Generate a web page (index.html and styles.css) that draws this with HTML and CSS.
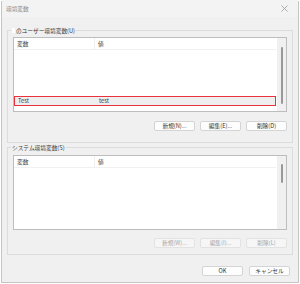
FILE: index.html
```html
<!DOCTYPE html>
<html>
<head>
<title>環境変数</title>
<link rel="stylesheet" href="styles.css">
</head>
<body>

<div class="window">
  <div class="titlebar">
    <span class="title">環境変数</span>
    <svg class="close" width="7" height="7" viewBox="0 0 7 7">
      <path d="M0.5 0.5 L6.5 6.5 M6.5 0.5 L0.5 6.5" stroke="#9a9a9a" stroke-width="0.8" fill="none"/>
    </svg>
  </div>

  <div class="content">
    <div class="group group-user">
      <div class="group-label"><span class="redacted"></span>のユーザー環境変数(U)</div>
      <div class="listbox">
        <div class="list-main">
          <div class="list-header">
            <div class="col col-name">変数</div>
            <div class="col col-value">値</div>
          </div>
          <div class="list-rows">
            <div class="row selected">
              <div class="col col-name">Test</div>
              <div class="col col-value">test</div>
            </div>
          </div>
        </div>
        <div class="scrollbar"><div class="thumb thumb-user"></div></div>
      </div>
      <div class="buttons">
        <button class="btn">新規(N)...</button>
        <button class="btn">編集(E)...</button>
        <button class="btn">削除(D)</button>
      </div>
    </div>

    <div class="group group-system">
      <div class="group-label">システム環境変数(S)</div>
      <div class="listbox">
        <div class="list-main">
          <div class="list-header">
            <div class="col col-name">変数</div>
            <div class="col col-value">値</div>
          </div>
        </div>
        <div class="scrollbar"><div class="thumb thumb-system"></div></div>
      </div>
      <div class="buttons">
        <button class="btn" disabled>新規(W)...</button>
        <button class="btn" disabled>編集(I)...</button>
        <button class="btn" disabled>削除(L)</button>
      </div>
    </div>

    <div class="footer">
      <button class="btn">OK</button>
      <button class="btn">キャンセル</button>
    </div>
  </div>
</div>

</body>
</html>
```

FILE: styles.css
```css
body {
  margin: 0;
  padding: 0;
  background-color: #ffffff;
  font-family: "Noto Sans CJK JP", "Noto Sans", sans-serif;
  font-size: 5.7px;
  color: #3a3a3a;
}

.window {
  margin: 1px;
  width: 296px;
  height: 280px;
  border: 1px solid #c4c4c4;
  background-color: #f0f0f0;
  display: flex;
  flex-direction: column;
}

.titlebar {
  height: 18px;
  background-color: #f3f3f3;
  display: flex;
  align-items: center;
  justify-content: space-between;
  padding: 0 10px 0 4px;
  box-sizing: border-box;
  margin-top: -3px;
}

.title {
  color: #8a8a8a;
}

.close {
  display: block;
}

.content {
  padding: 10px 5px 0 5px;
  margin-top: 3px;
  display: flex;
  flex-direction: column;
}

.group {
  position: relative;
  border: 1px solid #dcdcdc;
  padding: 6px 5px 11px 5px;
}

.group-system {
  margin-top: 4px;
  padding-top: 7px;
  padding-bottom: 6px;
}

.group-label {
  position: absolute;
  left: 3px;
  top: -5px;
  padding: 0 1px;
  background-color: #f0f0f0;
  line-height: 9px;
  display: flex;
  align-items: center;
}

.redacted {
  display: inline-block;
  width: 3px;
  height: 5px;
  background-color: #ffffff;
  margin-right: 1px;
}

.listbox {
  height: 75px;
  border: 1px solid #bdbdbd;
  background-color: #ffffff;
  display: flex;
  box-sizing: border-box;
}

.list-main {
  flex: 1;
  display: flex;
  flex-direction: column;
}

.list-header {
  height: 11px;
  display: flex;
  border-bottom: 1px solid #f0f0f0;
  margin-right: 1px;
}

.col {
  line-height: 11px;
  padding-left: 3px;
  white-space: nowrap;
}

.col-name {
  width: 77px;
}

.list-header .col-name {
  border-right: 1px solid #f0f0f0;
}

.list-rows {
  flex: 1;
  display: flex;
  flex-direction: column;
  justify-content: flex-end;
  padding-bottom: 5px;
}

.row {
  display: flex;
  height: 10px;
  box-sizing: border-box;
}

.row .col {
  line-height: 8px;
}

.row.selected {
  background-color: #eeeeee;
  border: 1px solid #e8333d;
  margin-right: 1px;
}

.row.selected .col-name {
  width: 78px;
}

.scrollbar {
  width: 9px;
  background-color: #f0f0f0;
  display: flex;
  justify-content: center;
}

.thumb {
  width: 2px;
  background-color: #999999;
  border-radius: 1px;
}

.thumb-user {
  margin-top: 9px;
  height: 57px;
}

.thumb-system {
  margin-top: 8px;
  height: 19px;
}

.buttons {
  margin-top: 9px;
  display: flex;
  justify-content: flex-end;
  gap: 5px;
}

.group-system .buttons {
  margin-top: 8px;
}

.btn {
  width: 41px;
  height: 10px;
  padding: 0;
  margin: 0;
  font-family: "Noto Sans CJK JP", "Noto Sans", sans-serif;
  font-size: 5.7px;
  line-height: 8px;
  color: #333333;
  background-color: #fdfdfd;
  border: 1px solid #d4d4d4;
  border-radius: 2px;
}

.btn:disabled {
  color: #a6a6a6;
  background-color: #f6f6f6;
  border-color: #e2e2e2;
}

.footer {
  margin-top: 11px;
  display: flex;
  justify-content: flex-end;
  gap: 6px;
  padding-right: 3px;
}
```
